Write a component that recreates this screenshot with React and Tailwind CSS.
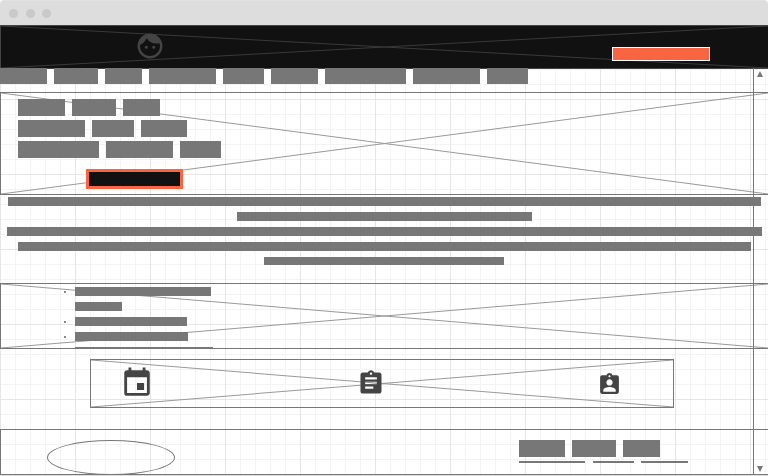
import { MdFace, MdEvent, MdAssignment, MdAssignmentInd } from "react-icons/md";

function Cross({ stroke = "#999999" }) {
  return (
    <svg className="absolute inset-0 h-full w-full" preserveAspectRatio="none" viewBox="0 0 100 100">
      <path d="M0 0L100 100M0 100L100 0" stroke={stroke} strokeWidth="1" vectorEffect="non-scaling-stroke" fill="none" />
    </svg>
  );
}

function Words({ widths, className }) {
  return (
    <div className={`flex gap-[7px] ${className}`}>
      {widths.map((w, i) => (
        <div key={i} className="shrink-0 bg-[#777777]" style={{ width: w }} />
      ))}
    </div>
  );
}

function Item({ width, bullet }) {
  return (
    <div className="flex h-[9px] shrink-0 items-center">
      <div className={`mr-[9px] size-[2px] ${bullet ? "bg-[#888888]" : ""}`} />
      <div className="h-[9px] bg-[#777777]" style={{ width }} />
    </div>
  );
}

function Grid() {
  return (
    <svg className="absolute inset-0 h-full w-full" shapeRendering="crispEdges">
      <defs>
        <pattern id="minor" width="15" height="15" y="9" patternUnits="userSpaceOnUse">
          <path d="M0 0.5H15M0.5 0V15" stroke="#f3f3f3" />
        </pattern>
        <pattern id="major" width="75" height="75" y="24" patternUnits="userSpaceOnUse">
          <path d="M0 0.5H75M0.5 0V75" stroke="#e6e6e6" />
        </pattern>
      </defs>
      <rect width="100%" height="100%" fill="url(#minor)" />
      <rect width="100%" height="100%" fill="url(#major)" />
    </svg>
  );
}

export default function App() {
  return (
    <div className="relative h-[476px] w-[768px] overflow-hidden bg-white">
      <Grid />
      <div className="relative flex flex-col">
        <div className="bg-white">
          <div className="flex h-[25px] items-center gap-2 rounded-t-[4px] border-t border-[#e2e2e2] bg-[#dddddd] pl-[9px]">
            <div className="size-[9px] rounded-full bg-[#c9c9c9]" />
            <div className="size-[9px] rounded-full bg-[#c9c9c9]" />
            <div className="-ml-px size-[9px] rounded-full bg-[#c9c9c9]" />
          </div>
        </div>

        <header className="relative flex h-11 items-start justify-between border-y border-l border-[#444444] bg-[#111111] pr-[58px] pl-[134px]">
          <Cross stroke="#3a3a3a" />
          <MdFace className="relative mt-[5px] size-[30px] text-[#444444]" />
          <div className="relative mt-[21px] h-[14px] w-[98px] border border-white bg-[#f96443]" />
        </header>

        <nav className="relative -mt-px w-[528px]">
          <div className="absolute inset-x-0 top-px bottom-0 bg-white" />
          <Words className="relative h-4" widths={[47, 44, 37, 67, 41, 47, 81, 67, 41]} />
        </nav>

        <section className="relative mt-2 h-[103px] border-y border-l border-[#777777] pt-[6px] pl-[17px]">
          <Cross />
          <div className="relative flex flex-col items-start gap-1">
            <Words className="h-[17px]" widths={[47, 44, 37]} />
            <Words className="h-[17px]" widths={[67, 42, 46]} />
            <Words className="h-[17px]" widths={[81, 67, 41]} />
          </div>
          <div className="relative mt-[11px] ml-[68px] h-5 w-[97px] border-3 border-[#f96443] bg-[#111111]" />
        </section>

        <section className="mt-[2px] flex h-[69px] flex-col items-center gap-[6px]">
          <div className="h-[9px] w-[753px] bg-[#777777]" />
          <div className="h-[9px] w-[295px] bg-[#777777]" />
          <div className="h-[9px] w-[755px] bg-[#777777]" />
          <div className="h-[9px] w-[733px] bg-[#777777]" />
          <div className="h-2 w-[240px] bg-[#777777]" />
        </section>

        <section className="relative mt-[17px] h-[66px] border-y border-l border-[#777777]">
          <Cross />
          <div className="relative flex h-full flex-col gap-[6px] overflow-hidden pt-[3px] pl-[63px]">
            <Item width={136} bullet />
            <Item width={47} />
            <Item width={112} bullet />
            <Item width={113} bullet />
            <Item width={138} />
          </div>
        </section>

        <section className="relative mt-[10px] ml-[90px] flex h-[49px] w-[584px] items-start border border-[#777777] pl-[29px]">
          <Cross />
          <MdEvent className="relative mt-[5.5px] size-[34px] text-[#444444]" />
          <MdAssignment className="relative mt-[9px] ml-[203px] size-[28px] text-[#444444]" />
          <MdAssignmentInd className="relative mt-[11.5px] ml-[212px] size-[25px] text-[#444444]" />
        </section>

        <footer className="mt-[21px] flex h-[46px] items-start justify-between border-y border-l border-[#777777] pt-[10px] pr-[80px] pl-[46px]">
          <div className="h-[35px] w-[128px] rounded-[50%] border border-[#777777]" />
          <div className="w-[169px]">
            <Words className="h-[17px]" widths={[46, 44, 37]} />
            <div className="mt-1 flex h-[2px]">
              <div className="w-[66px] bg-[#777777]" />
              <div className="ml-2 w-[41px] bg-[#777777]" />
              <div className="ml-[7px] w-[47px] bg-[#777777]" />
            </div>
          </div>
        </footer>
        <div className="h-px bg-[#dddddd]" />
      </div>

      <div className="absolute top-[68px] right-0 flex h-[406px] w-[15px] flex-col items-center justify-between border-l border-[#777777] pt-[3px] pr-[2px] pb-[2px]">
        <svg className="h-[6px] w-[6px]" viewBox="0 0 6 6"><path d="M3 0L6 6H0Z" fill="#777777" /></svg>
        <svg className="h-[6px] w-[6px]" viewBox="0 0 6 6"><path d="M0 0H6L3 6Z" fill="#777777" /></svg>
      </div>
    </div>
  );
}
